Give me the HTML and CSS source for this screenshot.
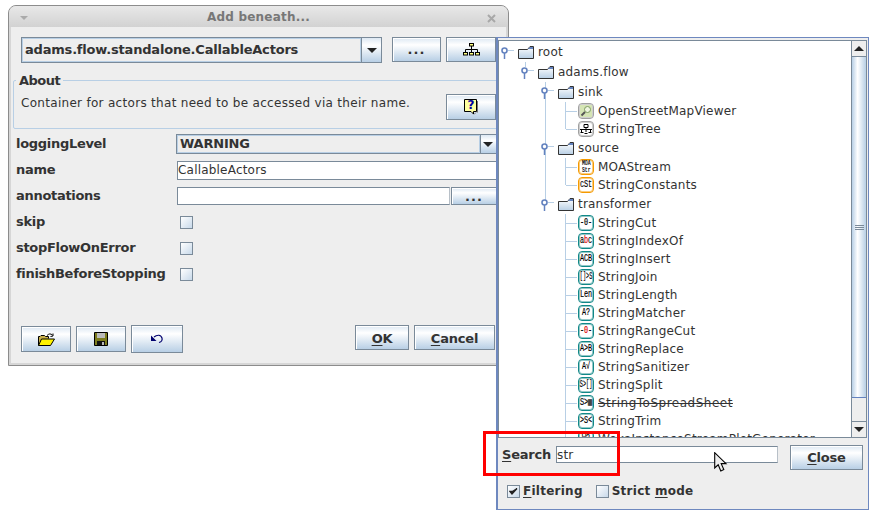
FILE: index.html
```html
<!DOCTYPE html>
<html>
<head>
<meta charset="utf-8">
<title>Add beneath</title>
<link rel="stylesheet" href="styles.css">
</head>
<body>
<svg class="defs" width="0" height="0">
  <defs>
    <linearGradient id="fg" x1="0" y1="0" x2="0" y2="1"><stop offset="0" stop-color="#fff"/><stop offset="1" stop-color="#b8cfe5"/></linearGradient>
    <symbol id="folder" viewBox="0 0 17 13">
      <path d="M.5 3.5H9.5L12 .5H15.5V12.5H.5Z" fill="url(#fg)" stroke="#333"/>
      <path d="M10 3H15V1H12Z" fill="#6382bf"/>
    </symbol>
    <symbol id="handle" viewBox="0 0 17 13">
      <path d="M5.5 7V13" stroke="#6382bf" stroke-width="1.5"/>
      <path d="M9 4.5H15" stroke="#b8cfe5"/>
      <circle cx="5.5" cy="4.5" r="2.5" fill="#fff" stroke="#6382bf" stroke-width="1.6"/>
    </symbol>
  </defs>
</svg>

<section class="dialog">
  <header class="titlebar">
    <span class="title-arrow"></span>
    <span class="title">Add beneath...</span>
    <svg class="title-x" viewBox="0 0 9 9"><path d="M1 1L8 8M8 1L1 8" stroke="#a8a8a8" stroke-width="2"/></svg>
  </header>
  <div class="dialog-body">
    <div class="top-row">
      <div class="combo combo-main">
        <span class="combo-text">adams.flow.standalone.CallableActors</span>
        <span class="combo-btn"><i class="arrow-down"></i></span>
      </div>
      <button class="btn btn-dots">...</button>
      <button class="btn btn-tree">
        <svg width="17" height="13" viewBox="0 0 17 13"><g fill="#ffff80" stroke="#000"><rect x="6.5" y=".5" width="4" height="2.5"/><rect x=".5" y="9.5" width="4" height="2.5"/><rect x="6.5" y="9.5" width="4" height="2.5"/><rect x="12.5" y="9.5" width="4" height="2.5"/></g><path d="M8.5 3V9.5M2.5 9.5V6.5H14.5V9.5" fill="none" stroke="#000"/></svg>
      </button>
    </div>

    <fieldset class="about">
      <legend>About</legend>
      <div class="about-inner">
        <p>Container for actors that need to be accessed via their name.</p>
        <button class="btn btn-help">
          <svg width="14" height="16" viewBox="0 0 14 16"><path d="M.5.5H12.5V12.5H9.5V15L7 12.5H.5Z" fill="#ffffa0" stroke="#000"/><path d="M13.5 2V13.5M10 15.5L12 13.5" stroke="#777"/></svg>
          <b class="help-q">?</b>
        </button>
      </div>
    </fieldset>

    <div class="form">
      <label>loggingLevel</label>
      <div class="combo combo-level"><span class="combo-text">WARNING</span><span class="combo-btn"><i class="arrow-down"></i></span></div>
      <label>name</label>
      <input class="field field-name" value="CallableActors">
      <label>annotations</label>
      <div class="annot"><input class="field field-annot"><button class="btn btn-annot">...</button></div>
      <label>skip</label><span class="check form-check"></span>
      <label>stopFlowOnError</label><span class="check form-check"></span>
      <label>finishBeforeStopping</label><span class="check form-check"></span>
    </div>

    <div class="bottom-row">
      <button class="btn btn-icon">
        <svg width="17" height="13" viewBox="0 0 17 13"><path d="M.5 12.5V3.5H2L3 2.5H6.5L7.5 3.5H10.5V5.5" fill="#c9b04a" stroke="#000"/><path d="M.5 12.5L3.5 6H16.5L12.5 12.5Z" fill="#fff200" stroke="#000"/><path d="M9 2.5C11 .5 12.5.5 14.5 2M12.5 3.5L15 3V.5" fill="none" stroke="#000"/></svg>
      </button>
      <button class="btn btn-icon">
        <svg width="14" height="14" viewBox="0 0 14 14"><path d="M.5.5H13.5V13.5H.5Z" fill="#7d7d1e" stroke="#000"/><rect x="3" y="1" width="8" height="5" fill="#bbb"/><rect x="3" y="9" width="8" height="4" fill="#111"/><rect x="8" y="10" width="2" height="3" fill="#bbb"/></svg>
      </button>
      <button class="btn btn-icon btn-undo">
        <svg width="14" height="10" viewBox="0 0 14 10"><path d="M4 3C7 0.5 11 .5 12 4C12.6 6.5 11 8 9 8.5" fill="none" stroke="#00006e" stroke-width="1.2"/><path d="M1 1.5V7H6.5Z" fill="#00006e"/></svg>
      </button>
      <span class="spacer"></span>
      <button class="btn btn-ok"><u>O</u>K</button>
      <button class="btn btn-cancel"><u>C</u>ancel</button>
    </div>
  </div>
</section>

<section class="popup">
  <div class="pane">
    <div class="tree">
      <div class="row folder-row"><svg class="handle"><use href="#handle"/></svg><svg class="folder"><use href="#folder"/></svg><span>root</span></div>
      <div class="kids line-root">
        <div class="row folder-row"><svg class="handle"><use href="#handle"/></svg><svg class="folder"><use href="#folder"/></svg><span>adams.flow</span></div>
        <div class="kids line-adams">
          <div class="row folder-row"><svg class="handle"><use href="#handle"/></svg><svg class="folder"><use href="#folder"/></svg><span>sink</span></div>
          <div class="kids">
            <div class="row leaf"><i class="ico gray"><svg width="12" height="12" viewBox="0 0 12 12"><rect width="14" height="14" fill="#d5e5b5"/><circle cx="7.5" cy="4.5" r="3" fill="#eef5e0" stroke="#7c9a60"/><path d="M5 7L1.5 10.5" stroke="#555" stroke-width="2"/></svg></i><span>OpenStreetMapViewer</span></div>
            <div class="row leaf"><i class="ico gray"><svg width="12" height="12" viewBox="0 0 12 12"><path d="M4 1.5H8V4.5H4ZM6 4.5V9M0 6.5H12M1.5 6.5V9.5M10.5 6.5V9.5M.5 9.5H3.5M8.5 9.5H11.5M4.5 10.5H7.5" fill="none" stroke="#000"/></svg></i><span>StringTree</span></div>
          </div>
          <div class="row folder-row"><svg class="handle"><use href="#handle"/></svg><svg class="folder"><use href="#folder"/></svg><span>source</span></div>
          <div class="kids">
            <div class="row leaf"><i class="ico orange two"><b>MOA</b><b>Str</b></i><span>MOAStream</span></div>
            <div class="row leaf"><i class="ico orange"><b>cSt</b></i><span>StringConstants</span></div>
          </div>
          <div class="row folder-row"><svg class="handle"><use href="#handle"/></svg><svg class="folder"><use href="#folder"/></svg><span>transformer</span></div>
          <div class="kids">
            <div class="row leaf"><i class="ico teal"><b>-0-</b></i><span>StringCut</span></div>
            <div class="row leaf"><i class="ico teal"><b>a<em>b</em>c</b></i><span>StringIndexOf</span></div>
            <div class="row leaf"><i class="ico teal"><b>ACB</b></i><span>StringInsert</span></div>
            <div class="row leaf"><i class="ico teal"><b class="four">[]&gt;S</b></i><span>StringJoin</span></div>
            <div class="row leaf"><i class="ico teal"><b>Len</b></i><span>StringLength</span></div>
            <div class="row leaf"><i class="ico teal"><b>A?</b></i><span>StringMatcher</span></div>
            <div class="row leaf"><i class="ico teal"><b>-<em>0</em>-</b></i><span>StringRangeCut</span></div>
            <div class="row leaf"><i class="ico teal"><b>A&gt;B</b></i><span>StringReplace</span></div>
            <div class="row leaf"><i class="ico teal"><b>A√</b></i><span>StringSanitizer</span></div>
            <div class="row leaf"><i class="ico teal"><b class="four">S&gt;[]</b></i><span>StringSplit</span></div>
            <div class="row leaf"><i class="ico teal"><b>S&gt;▥</b></i><span class="strike">StringToSpreadSheet</span></div>
            <div class="row leaf"><i class="ico teal"><b>&gt;S&lt;</b></i><span>StringTrim</span></div>
            <div class="row leaf"><i class="ico teal"><b>W?</b></i><span>WekaInstanceStreamPlotGenerator</span></div>
          </div>
        </div>
      </div>
    </div>
    <div class="scrollbar">
      <span class="sb-btn"><i class="arrow-up"></i></span>
      <div class="sb-track">
        <div class="sb-thumb"><i class="grip"></i></div>
      </div>
      <span class="sb-btn sb-btn-down"><i class="arrow-down"></i></span>
    </div>
  </div>
  <div class="search-row">
    <span class="search-label"><u>S</u>earch</span>
    <input class="field field-search" value="str">
    <button class="btn btn-close"><u>C</u>lose</button>
  </div>
  <div class="options">
    <span class="check checked"><svg width="9" height="9" viewBox="0 0 9 9"><path d="M1 4.5L3 7L8 1.5L3.5 4.5Z" stroke="#222" stroke-width="1.3" fill="#222"/></svg></span>
    <span class="opt-label"><u>F</u>iltering</span>
    <span class="check opt-second"></span>
    <span class="opt-label">Strict <u>m</u>ode</span>
  </div>
</section>

<div class="highlight"></div>
<svg class="cursor" width="15" height="21" viewBox="0 0 15 21"><path d="M.7.7V16L4.2 12.8L6.8 19L9.8 17.6L7.2 11.6H12Z" fill="#eee" stroke="#000" stroke-width="1.1"/></svg>
</body>
</html>
```
FILE: styles.css
```css
* { box-sizing: border-box; }
html, body { margin: 0; padding: 0; }
body {
  position: relative;
  width: 879px;
  height: 518px;
  overflow: hidden;
  background: #fff;
  color: #333;
  font: 13px "DejaVu Sans", sans-serif;
}
.defs { position: absolute; }
u { text-underline-offset: 2px; }

/* dialog window */
.dialog {
  position: absolute;
  left: 8px;
  top: 5px;
  width: 501px;
  height: 361px;
  display: flex;
  flex-direction: column;
  border: 1px solid #8c8c8c;
  border-radius: 8px 8px 0 0;
  background: #d6d6d6;
  overflow: hidden;
}
.titlebar {
  flex: none;
  height: 21px;
  position: relative;
  display: flex;
  align-items: center;
  justify-content: center;
  background: linear-gradient(#e8e8e8, #d2d2d2);
}
.title { font-weight: bold; font-size: 12px; color: #777; letter-spacing: .2px; }
.title-arrow {
  position: absolute;
  left: 11px;
  top: 10px;
  border: 4px solid transparent;
  border-top: 4px solid #aaa;
}
.title-x { position: absolute; right: 12px; top: 8px; width: 9px; height: 9px; }
.dialog-body {
  flex: 1;
  display: flex;
  flex-direction: column;
  margin: 0 2px 2px;
  padding: 10px;
  background: #eee;
  min-height: 0;
}

/* controls */
.btn {
  display: inline-flex;
  align-items: center;
  justify-content: center;
  padding: 0;
  border: 1px solid #7a8a99;
  box-shadow: inset 1px 1px 0 #fff;
  background: linear-gradient(#dde8f3, #fff 30%, #b8cfe5);
  color: #333;
  font: bold 13px "DejaVu Sans", sans-serif;
  letter-spacing: -.2px;
}
.combo {
  display: flex;
  border: 1px solid #7a8a99;
  background: #eee;
  font-weight: bold;
  letter-spacing: -.2px;
}
.combo-text {
  flex: 1;
  display: flex;
  align-items: center;
  padding: 0 0 2px 2px;
  border: 1px solid #b8cfe5;
  white-space: nowrap;
  overflow: hidden;
}
.combo-btn {
  display: flex;
  align-items: center;
  justify-content: center;
  border-left: 1px solid #7a8a99;
  background: linear-gradient(#dde8f3, #fff 30%, #b8cfe5);
}
.arrow-down, .arrow-up {
  display: block;
  width: 0;
  height: 0;
  border-left: 5px solid transparent;
  border-right: 5px solid transparent;
}
.arrow-down { border-top: 5px solid #222; }
.arrow-up { border-bottom: 5px solid #222; }
.field {
  height: 19px;
  padding: 0;
  border: 1px solid #7a8a99;
  border-right-color: #b8c0c8;
  background: #fff;
  color: #333;
  font: 12px "DejaVu Sans", sans-serif;
  letter-spacing: .2px;
  outline: none;
}
.check {
  display: flex;
  align-items: center;
  justify-content: center;
  width: 13px;
  height: 13px;
  border: 1px solid #7a8a99;
  background: linear-gradient(135deg, #fff, #c8d9ea);
}

/* top row */
.top-row { flex: none; display: flex; align-items: flex-start; height: 26px; }
.combo-main { width: 361px; height: 26px; font-size: 13px; }
.combo-main .combo-btn { width: 20px; }
.btn-dots { width: 49px; height: 25px; margin-left: 10px; letter-spacing: 1px; }
.btn-tree { width: 50px; height: 25px; margin-left: 5px; }

/* about */
.about {
  flex: none;
  min-width: 0;
  height: 56px;
  margin: 10px -2px 2px -8px;
  padding: 6px 1px 0 7px;
  border: 1px solid #b8cfe5;
  border-radius: 2px;
}
.about legend {
  height: 15px;
  margin-left: -5px;
  padding: 0 3px;
  font-weight: bold;
  line-height: 15px;
  letter-spacing: -.5px;
}
.about-inner { display: flex; align-items: flex-start; justify-content: space-between; }
.about p { margin: 2px 0 0; font-size: 12px; line-height: 14px; letter-spacing: .3px; }
.btn-help { position: relative; flex: none; width: 50px; height: 26px; }
.help-q {
  position: absolute;
  left: 18px;
  top: 4px;
  width: 12px;
  color: #0000a0;
  font-size: 12px;
  line-height: 12px;
  text-align: center;
}

/* form */
.form {
  flex: none;
  display: grid;
  grid-template-columns: 160px 1fr;
  grid-auto-rows: 26px;
  align-items: center;
  margin: 0 -11px 0 -5px;
}
.form label { margin-bottom: 2px; font-weight: bold; letter-spacing: -.3px; white-space: nowrap; }
.combo-level { width: 321px; height: 20px; font-size: 13px; }
.combo-level .combo-btn { width: 16px; justify-content: flex-start; padding-left: 2px; }
.field-name { width: 320px; margin-left: 1px; }
.annot { display: flex; align-items: flex-start; margin-left: 1px; }
.field-annot { width: 273px; height: 18px; }
.btn-annot { width: 46px; height: 18px; margin-left: 1px; letter-spacing: 1px; }
.form-check { margin-left: 4px; }

/* bottom */
.bottom-row { flex: none; display: flex; align-items: center; height: 28px; margin-top: auto; }
.btn-icon { width: 50px; height: 26px; margin-right: 5px; }
.btn-undo { width: 52px; height: 28px; }
.spacer { flex: 1; }
.btn-ok, .btn-cancel { align-self: flex-start; height: 25px; padding-top: 1px; }
.btn-ok { width: 54px; }
.btn-cancel { width: 81px; margin-left: 5px; margin-right: 1px; }

/* popup */
.popup {
  position: absolute;
  left: 496px;
  top: 37px;
  width: 373px;
  height: 473px;
  display: flex;
  flex-direction: column;
  padding: 2px 1px 0 0;
  border: 1px solid #6e88bf;
  border-left-width: 2px;
  background: #eee;
}
.pane {
  flex: none;
  height: 398px;
  display: flex;
  border: 1px solid #7a8a99;
  background: #fff;
}
.tree { flex: 1; min-width: 0; overflow: hidden; padding-top: 1px; font-size: 12px; letter-spacing: .2px; }
.kids { position: relative; margin-left: 20px; }
.kids::before {
  content: "";
  position: absolute;
  left: 6px;
  top: 0;
  bottom: 9px;
  width: 1px;
  background: #b8cfe5;
}
.line-root::before { bottom: auto; height: 5px; }
.line-adams::before { bottom: auto; height: 122px; }
.row { position: relative; display: flex; align-items: center; white-space: nowrap; }
.folder-row { height: 20px; }
.handle { flex: none; width: 17px; height: 13px; }
.folder { flex: none; width: 17px; height: 13px; margin-left: 2px; margin-right: 3px; }
.leaf { height: 18px; padding-left: 19px; }
.leaf::before {
  content: "";
  position: absolute;
  left: 7px;
  top: 9px;
  width: 11px;
  height: 1px;
  background: #b8cfe5;
}
.ico {
  flex: none;
  display: flex;
  flex-direction: column;
  align-items: center;
  justify-content: center;
  width: 16px;
  height: 16px;
  margin-right: 4px;
  border: 1px solid #118888;
  box-shadow: inset 0 0 0 1px rgba(17, 136, 136, .45);
  border-radius: 4px;
  background: #fff;
  color: #000;
  font: 10px/1 "Liberation Mono", monospace;
  letter-spacing: 0;
  overflow: hidden;
}
.ico b { flex: none; font-weight: normal; -webkit-text-stroke: .2px #000; white-space: nowrap; transform: scaleX(.68); }
.ico b.four { transform: scaleX(.52); }
.ico em { color: #d00; -webkit-text-stroke-color: #d00; font-style: normal; }
.ico.gray { border-color: #a0a0a0; box-shadow: inset 0 0 0 1px rgba(160, 160, 160, .5); }
.ico.orange { border-color: #f59a00; box-shadow: inset 0 0 0 1px rgba(245, 154, 0, .5); }
.ico.two { font-size: 7px; line-height: 7px; }
.strike { letter-spacing: .5px; text-decoration: line-through; }

.scrollbar { flex: none; width: 15px; display: flex; flex-direction: column; border-left: 1px solid #7a8a99; background: #eee; }
.sb-btn { flex: none; height: 16px; display: flex; align-items: center; justify-content: center; border-bottom: 1px solid #7a8a99; }
.sb-btn-down { border-top: 1px solid #7a8a99; border-bottom: 0; }
.sb-track { flex: 1; }
.sb-thumb {
  height: 341px;
  display: flex;
  align-items: center;
  justify-content: center;
  border-bottom: 1px solid #6382bf;
  background: linear-gradient(90deg, #b8cfe5, #fff 40%, #b8cfe5);
}
.grip { display: block; width: 9px; height: 5px; background: repeating-linear-gradient(#7a8a99 0 1px, transparent 1px 2px); }

.search-row { flex: none; display: flex; align-items: flex-start; height: 45px; padding: 7px 0 0 4px; }
.search-label { width: 54px; margin-top: 1px; font-weight: bold; line-height: 17px; letter-spacing: -.2px; }
.field-search { width: 222px; height: 17px; margin-top: 1px; }
.btn-close { width: 73px; height: 25px; margin-left: 12px; }
.options { flex: none; display: flex; align-items: center; height: 16px; padding-left: 9px; font-size: 12px; font-weight: bold; letter-spacing: .25px; }
.opt-label { margin-left: 3px; }
.opt-second { margin-left: 13px; }
.checked { background: linear-gradient(135deg, #fff, #c8d9ea); }

/* overlays */
.highlight {
  position: absolute;
  left: 483px;
  top: 431px;
  width: 137px;
  height: 45px;
  border: 3px solid #f00;
}
.cursor { position: absolute; left: 714px; top: 452px; }
```
